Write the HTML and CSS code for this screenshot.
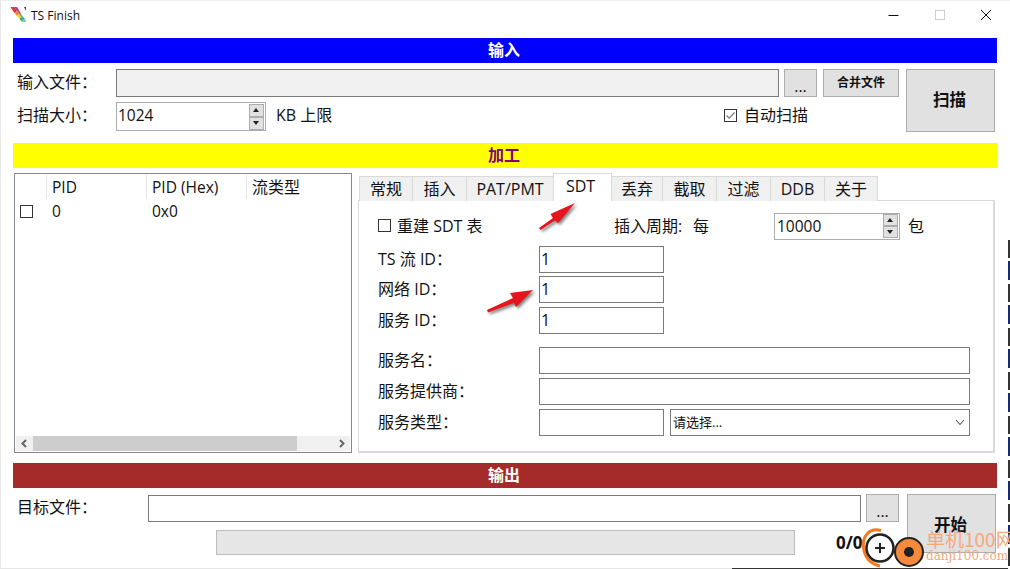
FILE: index.html
```html
<!DOCTYPE html>
<html lang="zh">
<head>
<meta charset="utf-8">
<title>TS Finish</title>
<link rel="stylesheet" href="styles.css">
</head>
<body>
<div class="window">
  <header class="titlebar">
    <svg class="app-icon" width="18" height="20" viewBox="0 0 18 20">
      <polygon points="0.5,1 4,1 7,5 4.5,7" fill="#d8343c"/>
      <polygon points="4,1 7,1 9.5,5 7,5" fill="#b03a90"/>
      <polygon points="4.5,7 7,5 9,8 7,10" fill="#ec8a2c"/>
      <polygon points="7,5 9.5,5 11,8 9,8" fill="#e84868"/>
      <polygon points="7,10 9,8 11,11 9.5,13" fill="#f0d820"/>
      <polygon points="9,8 11,8 13,11 11,11" fill="#58b848"/>
      <polygon points="9.5,13 11,11 13,14 12,16" fill="#48b048"/>
      <polygon points="11,11 13,11 15,13 13,14" fill="#3098d0"/>
      <polygon points="12,16 13,14 15.5,13 16,16" fill="#7cc4d8"/>
      <polygon points="14,1 16,1 16,5" fill="#445"/>
    </svg>
    <span class="app-name">TS Finish</span>
    <div class="win-controls">
      <svg class="win-btn" width="12" height="12" viewBox="0 0 12 12"><path d="M0.5 6.5H10.5" stroke="#111" fill="none"/></svg>
      <svg class="win-btn" width="12" height="12" viewBox="0 0 12 12"><rect x="1.5" y="1.5" width="9" height="9" stroke="#ccc" fill="none"/></svg>
      <svg class="win-btn" width="12" height="12" viewBox="0 0 12 12"><path d="M1 1L11 11M11 1L1 11" stroke="#111" fill="none"/></svg>
    </div>
  </header>

  <div class="band band-blue">输入</div>
  <section class="input-section">
    <div class="input-rows">
      <div class="row row-file">
        <label class="lbl lbl-input">输入文件：</label>
        <div class="field field-disabled grow"></div>
        <button class="btn btn-dots">...</button>
        <button class="btn btn-merge">合并文件</button>
      </div>
      <div class="row row-size">
        <label class="lbl lbl-input">扫描大小：</label>
        <div class="spin spin-size">
          <span class="spin-value">1024</span>
          <span class="spin-arrows"><i class="up"></i><i class="down"></i></span>
        </div>
        <span class="unit">KB 上限</span>
        <label class="check-label auto-scan">
          <svg class="check" width="13" height="13" viewBox="0 0 13 13"><rect x=".5" y=".5" width="12" height="12" fill="#fff" stroke="#333"/><path d="M2.5 6.5L5.2 9.2L10.5 3.5" stroke="#777" stroke-width="1.2" fill="none"/></svg>
          自动扫描
        </label>
      </div>
    </div>
    <button class="btn btn-big">扫描</button>
  </section>

  <div class="band band-yellow">加工</div>
  <section class="process-section">
    <div class="list">
      <div class="list-head">
        <span class="cell c0"></span><span class="cell c1">PID</span><span class="cell c2">PID (Hex)</span><span class="cell c3">流类型</span>
      </div>
      <div class="list-row">
        <span class="cell c0"><i class="box"></i></span><span class="cell c1">0</span><span class="cell c2">0x0</span>
      </div>
      <div class="scrollbar">
        <svg width="16" height="15" viewBox="0 0 16 15"><path d="M10 4L6.5 7.5L10 11" stroke="#666" stroke-width="2" fill="none"/></svg>
        <div class="track"><div class="thumb"></div></div>
        <svg width="16" height="15" viewBox="0 0 16 15"><path d="M6 4L9.5 7.5L6 11" stroke="#666" stroke-width="2" fill="none"/></svg>
      </div>
    </div>
    <div class="tabs">
      <nav class="tabbar">
        <span class="tab tab-edge">常规</span><span class="tab">插入</span><span class="tab tab-pat">PAT/PMT</span><span class="tab tab-active">SDT</span><span class="tab tab-narrow">丢弃</span><span class="tab">截取</span><span class="tab">过滤</span><span class="tab">DDB</span><span class="tab tab-edge">关于</span>
      </nav>
      <div class="panel">
        <div class="p-top">
          <label class="check-label rebuild"><i class="box"></i>重建 SDT 表</label>
          <span class="period">插入周期:</span>
          <span class="every">每</span>
          <div class="spin spin-period">
            <span class="spin-value">10000</span>
            <span class="spin-arrows"><i class="up"></i><i class="down"></i></span>
          </div>
          <span class="unit">包</span>
        </div>
        <div class="p-grid p-ids">
          <label class="lbl">TS 流 ID：</label><div class="field f-short">1</div>
          <label class="lbl">网络 ID：</label><div class="field f-short">1</div>
          <label class="lbl">服务 ID：</label><div class="field f-short">1</div>
        </div>
        <div class="p-grid p-info">
          <label class="lbl">服务名：</label><div class="field f-wide"></div>
          <label class="lbl">服务提供商：</label><div class="field f-wide"></div>
          <label class="lbl">服务类型：</label>
          <div class="type-row">
            <div class="field f-short"></div>
            <div class="field select"><span>请选择...</span>
              <svg width="10" height="7" viewBox="0 0 10 7"><path d="M1 1L5 5.5L9 1" stroke="#555" stroke-width="1.1" fill="none"/></svg>
            </div>
          </div>
        </div>
      </div>
    </div>
  </section>

  <div class="band band-red">输出</div>
  <section class="output-section">
    <div class="output-rows">
      <div class="row row-target">
        <label class="lbl lbl-target">目标文件：</label>
        <div class="field grow"></div>
        <button class="btn btn-dots">...</button>
      </div>
      <div class="row row-progress">
        <div class="progress"></div>
        <span class="count">0/0</span>
      </div>
    </div>
    <button class="btn btn-start">开始</button>
  </section>

  <svg class="arrow arrow-tab" width="42" height="34" viewBox="0 0 42 34">
    <path d="M1 28L15 18L12.500 14L37 3L20 23L17 20.500L2.500 30Z" fill="#e8141c"/>
  </svg>
  <svg class="arrow arrow-id" width="54" height="32" viewBox="0 0 54 32">
    <path d="M3 25L29 13L26 8L49 5L32 22L30 18L4 27.500Z" fill="#e8141c"/>
  </svg>

  <div class="desk-bottom"></div>
  <div class="desk-right"></div>

  <div class="watermark">
    <svg class="wm-logo" width="70" height="44" viewBox="0 0 70 44">
      <path d="M22 5.500C10 2 3 12 4.500 23C6 33 12 39 21 41" stroke="#f47a20" stroke-width="3" fill="none"/>
      <circle cx="21" cy="23" r="13.500" fill="#fff" stroke="#222" stroke-width="2.500"/>
      <path d="M16 23H26M21 18V28" stroke="#222" stroke-width="2"/>
      <circle cx="50" cy="27" r="14" fill="#f58a3c" stroke="#222" stroke-width="2"/>
      <circle cx="50" cy="27" r="5" fill="#222"/>
    </svg>
    <div class="wm-text">
      <span class="wm-cn">单机100网</span>
      <span class="wm-en">danji100.com</span>
    </div>
  </div>
</div>
</body>
</html>
```
FILE: styles.css
```css
* { box-sizing: border-box; }
html, body { margin: 0; padding: 0; }
body {
  width: 1010px;
  height: 569px;
  overflow: hidden;
  background: #fff;
  font-family: "Open Sans", "Noto Sans CJK SC", sans-serif;
  font-size: 16px;
  line-height: 20px;
  color: #111;
}
.window {
  position: relative;
  height: 569px;
  padding: 0 13px 0 12px;
  border-left: 1px solid #e6e6e6;
  border-top: 1px solid #eee;
  border-bottom: 1px solid #e6e6e6;
}
i { display: block; font-style: normal; }

.titlebar {
  height: 37px;
  margin: 0 -13px 0 -12px;
  padding: 5px 0 0 9px;
  display: flex;
  align-items: flex-start;
}
.app-name { font-size: 12px; margin: 1px 0 0 3px; line-height: 17px; }
.win-controls { margin-left: auto; display: flex; gap: 34px; padding: 3px 18px 0 0; }
.win-btn { display: block; }

.band {
  width: 984px;
  height: 25px;
  padding-right: 2px;
  font-size: 16px;
  font-weight: 700;
  line-height: 24px;
  text-align: center;
}
.band-blue { background: #0000ff; color: #fff; }
.band-yellow { background: #ffff00; color: #800080; }
.band-red { background: #a52a2a; color: #fff; }

.row { display: flex; align-items: center; }
.grow { flex: 1; }
.lbl { white-space: nowrap; line-height: 20px; }
.lbl-input { width: 103px; padding-left: 4px; margin-top: -3px; }
.row-file .lbl-input { margin-top: -2px; }

.input-section { display: flex; gap: 7px; height: 80px; padding-top: 6px; }
.input-rows { width: 886px; display: flex; flex-direction: column; gap: 5px; }
.row-file { height: 28px; }
.row-size { height: 29px; }
.btn {
  border: 1px solid #adadad;
  background: #e1e1e1;
  color: #111;
  font-family: inherit;
  padding: 0;
}
.btn-dots { width: 33px; height: 28px; margin-left: 5px; font-size: 16px; line-height: 26px; padding-top: 3px; }
.btn-merge { width: 76px; height: 28px; margin-left: 6px; font-size: 12px; font-weight: 700; padding-bottom: 2px; }
.btn-big { width: 89px; height: 63px; font-size: 16.5px; font-weight: 700; padding: 0 2px 3px 0; }

.field {
  height: 27px;
  border: 1px solid #7a7a7a;
  background: #fff;
  padding-left: 1px;
  line-height: 24px;
}
.field-disabled { height: 28px; background: #f0f0f0; }

.spin {
  display: flex;
  align-items: center;
  border: 1px solid #adadad;
  background: #fff;
  padding: 0 1px 0 1px;
  height: 29px;
}
.spin-value { flex: 1; font-size: 15.5px; margin-top: -3px; }
.spin-size { width: 150px; }
.spin-period { width: 126px; height: 27px; }
.spin-period .spin-value { margin-top: -1px; padding-left: 1px; }
.spin-arrows { width: 15px; display: flex; flex-direction: column; }
.spin-period .spin-arrows i { height: 12px; }
.spin-arrows i {
  height: 13px;
  background: #e1e1e1;
  border: 1px solid #adadad;
  position: relative;
}
.spin-arrows i::after {
  content: "";
  position: absolute;
  left: 3px;
  border-left: 3.5px solid transparent;
  border-right: 3.5px solid transparent;
}
.spin-arrows .up::after { top: 3px; border-bottom: 4px solid #222; }
.spin-arrows .down::after { top: 3px; border-top: 4px solid #222; }
.unit { margin-left: 10px; margin-top: -3px; }
.spin-period + .unit { margin: 0 0 0 8px; }
.check-label { display: flex; align-items: center; white-space: nowrap; }
.auto-scan { margin-left: auto; margin-right: 91px; gap: 7px; margin-top: -3px; }
.check { display: block; }
.box { width: 13px; height: 13px; border: 1px solid #333; background: #fff; }

.process-section { display: flex; height: 295px; padding-top: 5px; }
.list {
  width: 338px;
  height: 280px;
  margin-left: 1px;
  border: 1px solid #828790;
  padding: 1px;
  display: flex;
  flex-direction: column;
}
.list-head { height: 24px; display: flex; align-items: center; }
.list-row { height: 24px; display: flex; align-items: center; }
.cell { display: flex; align-items: center; height: 100%; padding-left: 6px; white-space: nowrap; }
.list-head .cell { border-left: 1px solid #e5e5e5; padding-left: 5px; }
.list-head .c0 { border-left: 0; }
.c0 { width: 30px; }
.list-row .c0 { padding-left: 4px; }
.c1, .c2 { width: 100px; font-size: 15.5px; }
.list-row .c1, .list-row .c2 { padding-left: 6px; }
.scrollbar { margin-top: auto; height: 15px; display: flex; background: #f0f0f0; }
.scrollbar svg { flex: none; display: block; }
.track { flex: 1; }
.thumb { width: 264px; height: 15px; background: #cdcdcd; margin-left: 1px; }

.tabs { width: 637px; margin-left: 6px; display: flex; flex-direction: column; }
.tabbar { height: 28px; display: flex; align-items: flex-end; padding-left: 1px; position: relative; z-index: 1; margin-bottom: -1px; }
.tab {
  width: 55px;
  height: 25px;
  margin-right: -1px;
  background: #f0f0f0;
  border: 1px solid #d9d9d9;
  border-bottom: 0;
  text-align: center;
  line-height: 25px;
  white-space: nowrap;
  flex: none;
}
.tab-edge { width: 54px; }
.tab-narrow { width: 52px; }
.tab-pat { width: 88px; }
.tab-active { width: 59px; height: 28px; background: #fff; line-height: 25px; position: relative; padding-right: 4px; }
.panel {
  height: 253px;
  border: 1px solid #d9d9d9;
  border-right-width: 2px;
  border-bottom-width: 2px;
  padding: 0 0 0 19px;
}
.p-top { height: 45px; display: flex; align-items: center; padding-top: 5px; }
.rebuild { width: 236px; gap: 6px; margin-top: -1px; }
.period { width: 79px; margin-top: -1px; white-space: nowrap; }
.every { width: 81px; margin-top: -1px; }
.p-grid { display: grid; grid-template-columns: 161px auto; align-items: start; }
.p-grid .lbl { line-height: 27px; }
.p-ids { grid-template-rows: 30px 31px 27px; }
.p-info { margin-top: 13px; grid-template-rows: 31px 31px 27px; }
.f-short { width: 125px; }
.f-wide { width: 431px; }
.type-row { display: flex; gap: 6px; }
.select { width: 300px; font-size: 13px; display: flex; align-items: center; justify-content: space-between; padding: 0 4px 2px 2px; }
.select svg { display: block; margin-top: 2px; }

.output-section { display: flex; height: 79px; padding-top: 6px; }
.output-rows { width: 886px; }
.row-target { height: 28px; }
.lbl-target { width: 135px; padding-left: 4px; margin-top: -2px; }
.row-progress { height: 25px; margin-top: 8px; }
.progress { width: 579px; height: 25px; margin-left: 203px; background: #e6e6e6; border: 1px solid #bcbcbc; }
.count { margin-left: 41px; font-weight: 700; font-size: 17px; }
.btn-start { width: 89px; height: 59px; margin-left: 8px; font-size: 16.5px; font-weight: 700; padding: 0 2px 0 0; }

.arrow { position: absolute; filter: drop-shadow(2px 2px 1.5px rgba(0, 0, 0, .5)); }
.arrow-tab { left: 537px; top: 199px; }
.arrow-id { left: 483px; top: 284px; }

.desk-bottom { position: absolute; left: 731px; right: 0; bottom: -1px; height: 1px; background: #333; }
.desk-right {
  position: absolute;
  right: 0;
  top: 239px;
  bottom: -1px;
  width: 2px;
  background: repeating-linear-gradient(#333 0 18px, #fff 18px 21px, #1a2a6a 21px 40px, #fff 40px 44px);
}

.watermark { position: absolute; left: 858px; top: 524px; display: flex; }
.wm-logo { display: block; }
.wm-text { display: flex; flex-direction: column; margin-top: 3px; margin-left: -3px; color: #f7a878; white-space: nowrap; }
.wm-cn { font-size: 19px; line-height: 22px; font-family: "Noto Sans CJK SC", sans-serif; }
.wm-en { font-family: "DejaVu Serif", serif; font-size: 12px; line-height: 13px; }
```
